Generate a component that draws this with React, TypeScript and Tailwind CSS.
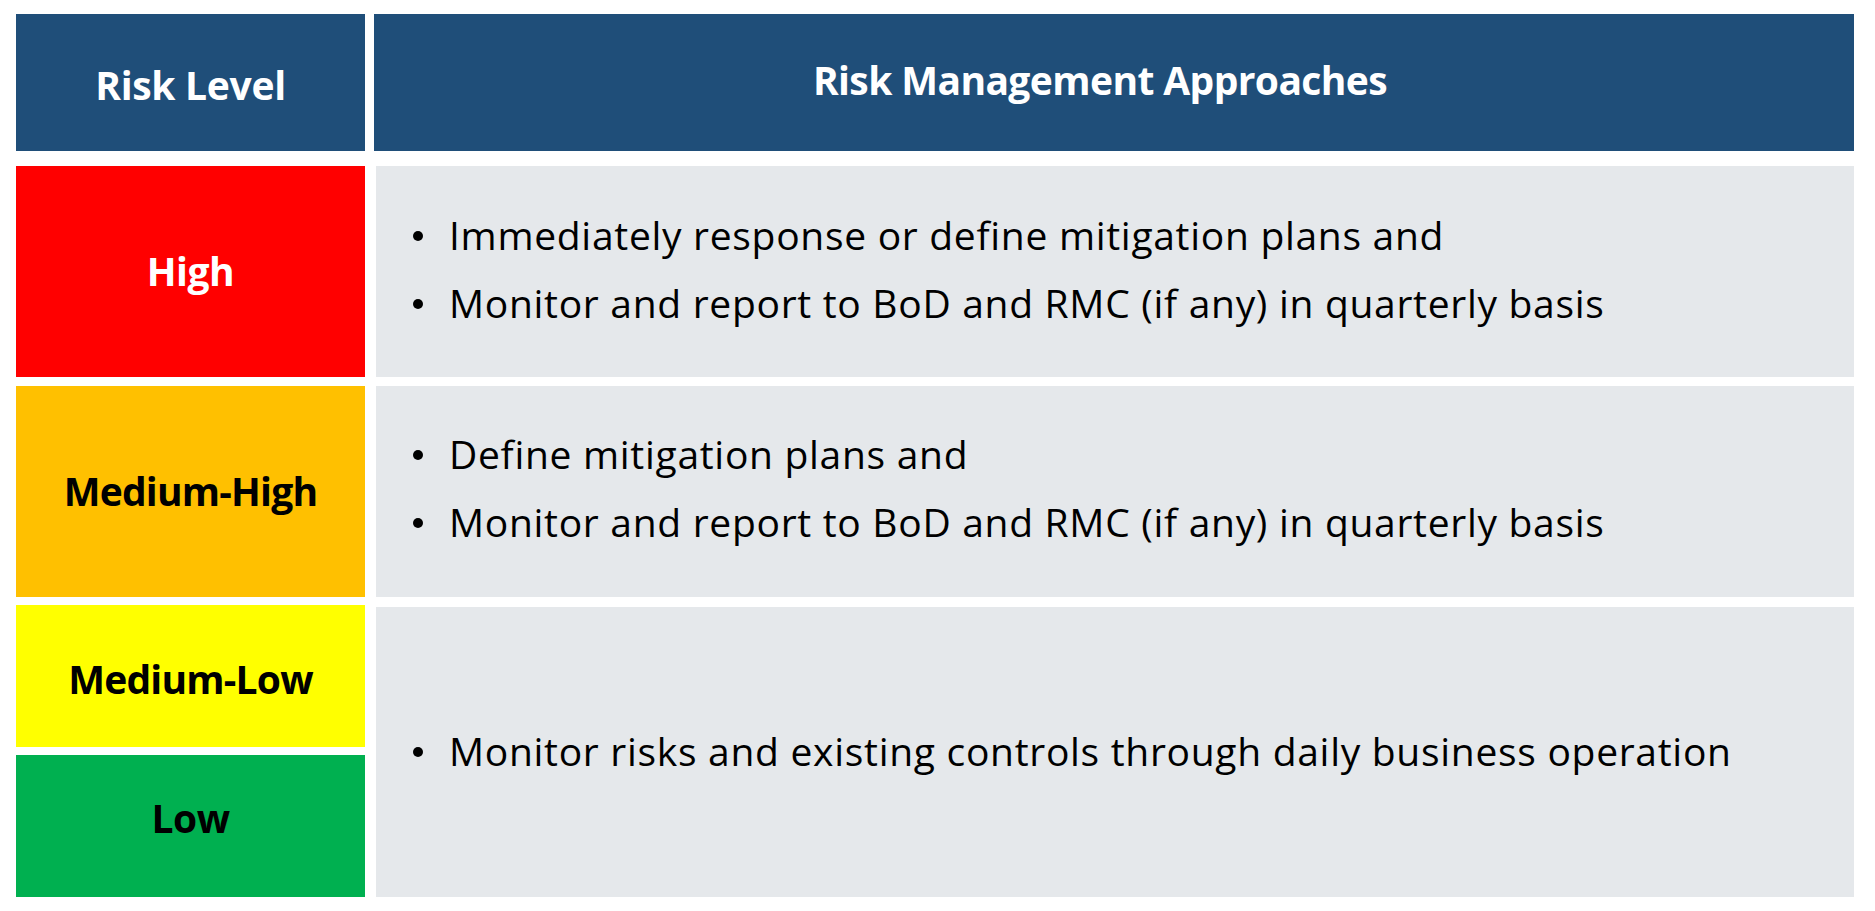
import React from "react";

const font = { fontFamily: "'Open Sans', Lato, sans-serif", fontVariantLigatures: "none" as const };

function Bullet({ children }: { children: React.ReactNode }) {
  return (
    <div className="flex items-baseline pl-[37px]">
      <span className="w-[36px] shrink-0">
        <span className="inline-block w-[10px] h-[10px] rounded-full bg-black relative top-[-9px]" />
      </span>
      <span className="tracking-[0.7px]">{children}</span>
    </div>
  );
}

export default function App() {
  return (
    <div className="w-[1875px] h-[911px] bg-white pl-[16px] pt-[14px] text-[39px] text-black" style={font}>
      <div className="flex gap-[9px] h-[137px]">
        <div className="w-[349px] bg-[#1F4E79] flex items-center justify-center pt-[6px] font-bold text-white tracking-[-0.3px]">
          Risk Level
        </div>
        <div className="w-[1480px] bg-[#1F4E79] flex items-center justify-center pb-[4px] pr-[28px] font-bold text-white tracking-[-0.6px]">
          Risk Management Approaches
        </div>
      </div>

      <div className="mt-[15px] flex gap-[11px] h-[211px]">
        <div className="w-[349px] bg-[#FF0000] flex items-center justify-center font-bold text-white tracking-[-0.5px]">High</div>
        <div className="w-[1478px] bg-[#E5E8EB] flex flex-col justify-center pb-[6px] leading-[68px]">
          <Bullet>Immediately response or define mitigation plans and</Bullet>
          <Bullet>Monitor and report to BoD and RMC (if any) in quarterly basis</Bullet>
        </div>
      </div>

      <div className="mt-[9px] flex gap-[11px] h-[211px]">
        <div className="w-[349px] bg-[#FFC000] flex items-center justify-center font-bold tracking-[-0.8px]">Medium-High</div>
        <div className="w-[1478px] bg-[#E5E8EB] flex flex-col justify-center pb-[8px] leading-[68px]">
          <Bullet>Define mitigation plans and</Bullet>
          <Bullet>Monitor and report to BoD and RMC (if any) in quarterly basis</Bullet>
        </div>
      </div>

      <div className="mt-[8px] flex gap-[11px]">
        <div className="w-[349px] flex flex-col gap-[8px]">
          <div className="h-[142px] bg-[#FFFF00] flex items-center justify-center pt-[7px] font-bold tracking-[-0.8px]">Medium-Low</div>
          <div className="h-[142px] bg-[#00B050] flex items-center justify-center pb-[16px] font-bold tracking-[-0.5px]">Low</div>
        </div>
        <div className="w-[1478px] mt-[2px] h-[290px] bg-[#E5E8EB] flex flex-col justify-center pb-[2px] leading-[68px]">
          <Bullet>Monitor risks and existing controls through daily business operation</Bullet>
        </div>
      </div>
    </div>
  );
}
